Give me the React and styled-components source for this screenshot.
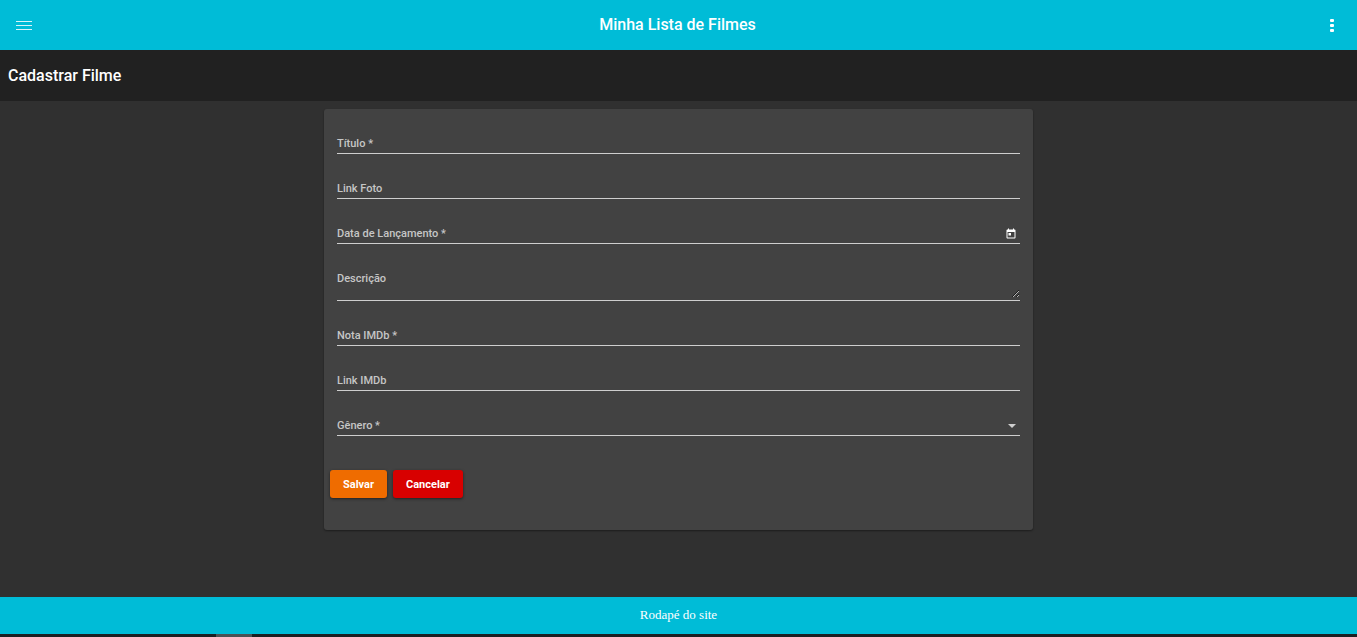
import React from "react";
import styled, { createGlobalStyle } from "styled-components";

const GlobalStyle = createGlobalStyle`
  *, *::before, *::after { box-sizing: border-box; }
  body {
    margin: 0;
    background: #303030;
    color: #fff;
    font-family: Roboto, "Liberation Sans", sans-serif;
  }
`;

const Page = styled.div`
  display: flex;
  flex-direction: column;
  min-height: 100vh;
`;

const Toolbar = styled.header`
  display: grid;
  grid-template-columns: 48px 1fr 50px;
  align-items: center;
  height: 50px;
  background: #00bcd7;
`;

const BarButton = styled.button`
  display: flex;
  align-items: center;
  justify-content: center;
  height: 50px;
  padding: 0;
  border: 0;
  background: none;
  color: #fff;
  cursor: pointer;
`;

const SiteTitle = styled.h1`
  margin: 0;
  font-size: 16px;
  font-weight: 500;
  line-height: 48px;
  text-align: center;
`;

const PageHeading = styled.h2`
  margin: 0;
  padding: 0 8px;
  background: #212121;
  font-size: 16px;
  font-weight: 500;
  line-height: 51px;
`;

const Main = styled.main`
  flex: 1;
  padding: 8px;
`;

const Card = styled.form`
  max-width: 709px;
  margin: 0 auto;
  padding: 0 13px 32px;
  border-radius: 3px;
  background: #424242;
  box-shadow: 0 1px 2px rgba(0, 0, 0, 0.4);
`;

const Field = styled.div`
  display: grid;
  grid-template-columns: 1fr auto;
  padding-top: 26px;
  border-bottom: 1px solid #cecece;
`;

const Label = styled.label`
  grid-area: 1 / 1;
  align-self: start;
  justify-self: start;
  color: #c6c6c6;
  font-size: 11px;
  font-weight: 500;
  line-height: 18px;
  pointer-events: none;
`;

const controlStyles = `
  grid-area: 1 / 1 / 2 / 3;
  width: 100%;
  margin: 0;
  padding: 0;
  border: 0;
  border-radius: 0;
  outline: 0;
  background: transparent;
  color: #fff;
  font: 500 11px Roboto, "Liberation Sans", sans-serif;
`;

const Input = styled.input`
  ${controlStyles}
  height: 18px;
`;

const TextArea = styled.textarea`
  ${controlStyles}
  display: block;
  height: 28px;
  margin-bottom: 2px;
  resize: vertical;
  color-scheme: dark;
`;

const Select = styled.select`
  ${controlStyles}
  height: 18px;
  appearance: none;
`;

const Suffix = styled.span`
  grid-area: 1 / 2;
  display: flex;
  align-items: center;
  justify-content: center;
  width: 16px;
  height: 18px;
  color: #cecece;
  pointer-events: none;
`;

const DateButton = styled.button`
  grid-area: 1 / 2;
  display: flex;
  align-items: center;
  justify-content: center;
  width: 18px;
  height: 18px;
  padding: 0;
  border: 0;
  background: none;
  color: #fff;
  cursor: pointer;
`;

const Actions = styled.div`
  display: flex;
  gap: 6px;
  margin: 34px -7px 0;
`;

const ActionButton = styled.button`
  height: 28px;
  padding: 0 13px;
  border: 0;
  border-radius: 3px;
  background: ${({ $color }) => $color};
  color: #fff;
  font: 700 11px Roboto, "Liberation Sans", sans-serif;
  box-shadow: 0 1px 3px rgba(0, 0, 0, 0.5);
  cursor: pointer;
`;

const Footer = styled.footer`
  padding-bottom: 2px;
  background: #00bcd7;
  font-family: "Liberation Serif", serif;
  font-size: 13px;
  line-height: 35px;
  text-align: center;
`;

const BottomStrip = styled.div`
  height: 3px;
  padding-left: 216px;
  background: #1c2022;
`;

const StripMark = styled.div`
  width: 36px;
  height: 3px;
  background: #4a5254;
`;

const fields = [
  { id: "titulo", label: "Título *" },
  { id: "foto", label: "Link Foto" },
  { id: "data", label: "Data de Lançamento *", kind: "date" },
  { id: "descricao", label: "Descrição", kind: "textarea" },
  { id: "nota", label: "Nota IMDb *" },
  { id: "imdb", label: "Link IMDb" },
  { id: "genero", label: "Gênero *", kind: "select" },
];

function Control({ id, kind }) {
  if (kind === "textarea") return <TextArea id={id} name={id} />;
  if (kind === "select") {
    return (
      <>
        <Select id={id} name={id} defaultValue="">
          <option value="" />
        </Select>
        <Suffix>
          <svg width="8" height="4" viewBox="0 0 8 4" aria-hidden="true">
            <path d="M0 0h8L4 4z" fill="currentColor" />
          </svg>
        </Suffix>
      </>
    );
  }
  return (
    <>
      <Input id={id} name={id} type="text" />
      {kind === "date" && (
        <DateButton type="button" aria-label="Abrir calendário">
          <svg width="12" height="12" viewBox="0 0 24 24" fill="currentColor" aria-hidden="true">
            <path d="M19 3h-1V1h-2v2H8V1H6v2H5c-1.100 0-2 .9-2 2v14c0 1.100.9 2 2 2h14c1.100 0 2-.9 2-2V5c0-1.100-.9-2-2-2zm0 16H5V8h14v11zM7 10h5v5H7z" />
          </svg>
        </DateButton>
      )}
    </>
  );
}

export default function App() {
  return (
    <Page>
      <GlobalStyle />
      <Toolbar>
        <BarButton type="button" aria-label="Menu">
          <svg width="16" height="10" viewBox="0 0 16 10" fill="currentColor" opacity="0.85" aria-hidden="true">
            <path d="M0 1h16v1H0zM0 5h16v1H0zM0 9h16v1H0z" />
          </svg>
        </BarButton>
        <SiteTitle>Minha Lista de Filmes</SiteTitle>
        <BarButton type="button" aria-label="Mais opções">
          <svg width="4" height="14" viewBox="0 0 4 14" fill="currentColor" aria-hidden="true">
            <rect y="1" width="4" height="3" rx="1" />
            <rect y="6" width="4" height="3" rx="1" />
            <rect y="11" width="4" height="3" rx="1" />
          </svg>
        </BarButton>
      </Toolbar>
      <PageHeading>Cadastrar Filme</PageHeading>
      <Main>
        <Card onSubmit={(event) => event.preventDefault()}>
          {fields.map(({ id, label, kind }) => (
            <Field key={id}>
              <Control id={id} kind={kind} />
              <Label htmlFor={id}>{label}</Label>
            </Field>
          ))}
          <Actions>
            <ActionButton type="submit" $color="#ef6c00">Salvar</ActionButton>
            <ActionButton type="button" $color="#d80000">Cancelar</ActionButton>
          </Actions>
        </Card>
      </Main>
      <Footer>Rodapé do site</Footer>
      <BottomStrip>
        <StripMark />
      </BottomStrip>
    </Page>
  );
}
